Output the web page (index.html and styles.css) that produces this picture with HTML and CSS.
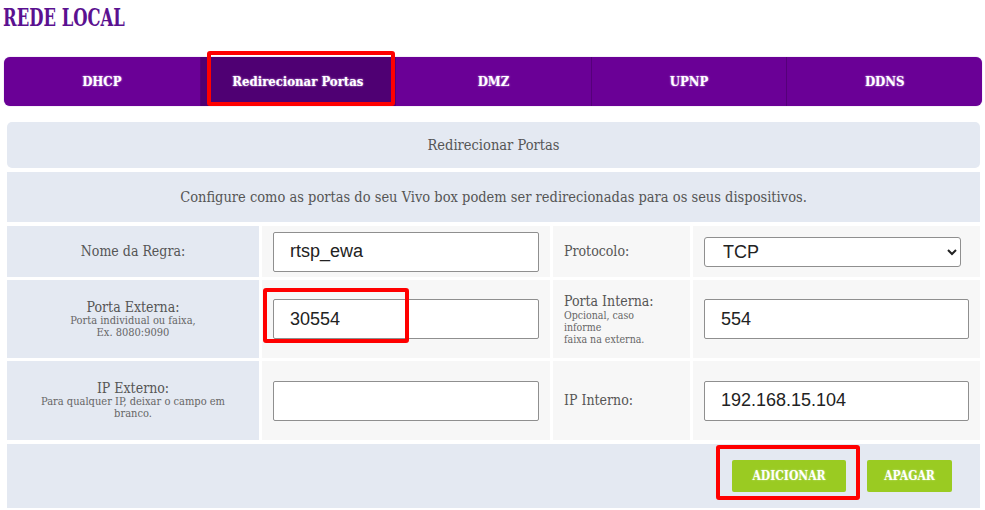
FILE: index.html
```html
<!DOCTYPE html>
<html lang="pt-BR">
<head>
    <meta charset="UTF-8">
    <title>Rede Local - Redirecionar Portas</title>
    <link rel="stylesheet" href="styles.css">
</head>
<body>
    <h1 class="title">REDE LOCAL</h1>

    <div class="tabs">
        <div class="tab">DHCP</div>
        <div class="tab active">Redirecionar Portas</div>
        <div class="tab">DMZ</div>
        <div class="tab">UPNP</div>
        <div class="tab">DDNS</div>
    </div>

    <div class="panel">
        <div class="panel-head">Redirecionar Portas</div>
        <div class="panel-desc">Configure como as portas do seu Vivo box podem ser redirecionadas para os seus dispositivos.</div>

        <div class="form-grid">
            <div class="lbl">Nome da Regra:</div>
            <div class="fld"><input type="text" class="txt" value="rtsp_ewa"></div>
            <div class="lbl2">Protocolo:</div>
            <div class="fld">
                <select class="sel">
                    <option>TCP</option>
                    <option>UDP</option>
                </select>
            </div>

            <div class="lbl">Porta Externa:<small>Porta individual ou faixa,<br>Ex. 8080:9090</small></div>
            <div class="fld"><input type="text" class="txt" value="30554"></div>
            <div class="lbl2">Porta Interna:<small>Opcional, caso<br>informe<br>faixa na externa.</small></div>
            <div class="fld"><input type="text" class="txt wide" value="554"></div>

            <div class="lbl">IP Externo:<small>Para qualquer IP, deixar o campo em<br>branco.</small></div>
            <div class="fld"><input type="text" class="txt" value=""></div>
            <div class="lbl2">IP Interno:</div>
            <div class="fld"><input type="text" class="txt wide" value="192.168.15.104"></div>
        </div>

        <div class="actions">
            <button class="btn btn-add">ADICIONAR</button>
            <button class="btn btn-del">APAGAR</button>
        </div>
    </div>

    <!-- marcacoes vermelhas do print -->
    <div class="mark mark-tab"></div>
    <div class="mark mark-port"></div>
    <div class="mark mark-add"></div>
</body>
</html>
```

FILE: styles.css
```css
*,*::before,*::after{
    box-sizing: border-box;
}

body{
    margin: 0;
    width: 985px;
    height: 510px;
    overflow: hidden;
    background: #fff;
    font-family: "DejaVu Serif", "Liberation Serif", serif;
    font-stretch: condensed;
    color: #555;
    position: relative;
}

.title{
    margin: 0;
    padding: 3px 0 0 4px;
    height: 57px;
    font-size: 24px;
    font-weight: bold;
    color: #5b1190;
    transform: scaleX(0.76);
    transform-origin: left top;
}

.tabs{
    display: grid;
    grid-template-columns: repeat(5, 1fr);
    margin: 0 3px 0 4px;
    height: 49px;
    background: #6a0096;
    border-radius: 6px;
    overflow: hidden;
    box-shadow: 0 0 1px #9b6cbf;
}

.tab{
    display: flex;
    justify-content: center;
    align-items: center;
    color: #fff;
    font-size: 13px;
    font-weight: bold;
    text-shadow: 0 0 2px #d9b8f0;
    border-left: 1px solid #55007a;
}

.tab:first-child{
    border-left: none;
}

.tab.active{
    background: #4f0073;
}

.panel{
    margin: 16px 5px 0 7px;
    display: flex;
    flex-direction: column;
    gap: 4px;
}

.panel-head, .panel-desc{
    display: flex;
    justify-content: center;
    align-items: center;
    background: #e4e9f2;
    font-size: 14.5px;
}

.panel-head{
    height: 46px;
    border-radius: 5px;
}

.panel-desc{
    height: 50px;
}

.form-grid{
    display: grid;
    grid-template-columns: 252px 288px 137px 1fr;
    grid-template-rows: 51px 78px 79px;
    gap: 3px;
}

.lbl{
    background: #e4e9f2;
    display: flex;
    flex-direction: column;
    justify-content: center;
    align-items: center;
    text-align: center;
    font-size: 14px;
    line-height: 15px;
}

.lbl small, .lbl2 small{
    display: block;
    font-size: 11px;
    line-height: 12px;
    color: #666;
}

.lbl2 small{
    font-size: 10.5px;
    line-height: 12px;
}

.lbl2{
    background: #f7f7f7;
    display: flex;
    flex-direction: column;
    justify-content: center;
    padding-left: 11px;
    font-size: 14px;
    line-height: 15px;
}

.fld{
    background: #f7f7f7;
    display: flex;
    align-items: center;
    padding: 0 11px;
}

.txt{
    width: 266px;
    height: 40px;
    border: 1px solid #8f8f8f;
    border-radius: 2px;
    padding: 0 16px;
    font-family: "Liberation Sans", Arial, sans-serif;
    font-size: 18px;
    color: #222;
    background: #fff;
}

.txt.wide{
    width: 265px;
}

.sel{
    width: 257px;
    height: 30px;
    border: 1px solid #8f8f8f;
    border-radius: 3px;
    padding: 0 14px;
    font-family: "Liberation Sans", Arial, sans-serif;
    font-size: 18px;
    color: #222;
    background: #fff;
}

.actions{
    height: 64px;
    background: #e4e9f2;
    display: flex;
    justify-content: flex-end;
    align-items: center;
    gap: 21px;
    padding-right: 28px;
}

.btn{
    height: 32px;
    padding: 0;
    border: none;
    border-radius: 2px;
    background: #9acb22;
    color: #fff;
    font-family: "DejaVu Serif", "Liberation Serif", serif;
    font-stretch: condensed;
    font-weight: bold;
    font-size: 12px;
    text-shadow: 0 0 2px #c8e690;
}

.btn-add{
    width: 114px;
}

.btn-del{
    width: 85px;
}

.mark{
    position: absolute;
    border: 4px solid #f00;
    border-radius: 3px;
}

.mark-tab{
    left: 207px;
    top: 51px;
    width: 188px;
    height: 55px;
}

.mark-port{
    left: 263px;
    top: 288px;
    width: 146px;
    height: 55px;
}

.mark-add{
    left: 716px;
    top: 445px;
    width: 144px;
    height: 55px;
}
```
